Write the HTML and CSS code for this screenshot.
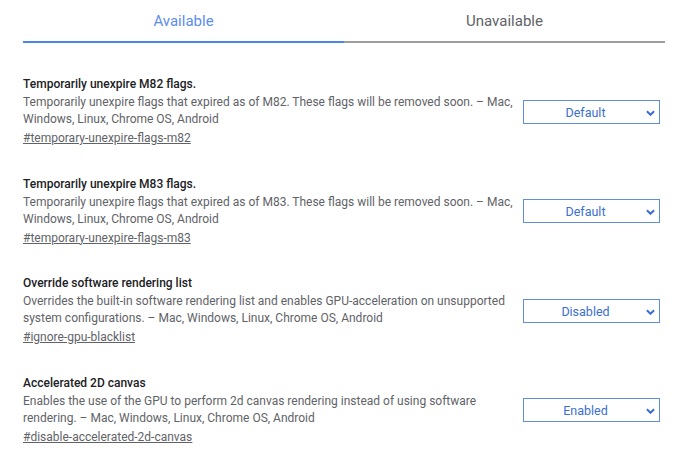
FILE: index.html
```html
<!DOCTYPE html>
<html lang="en">

<head>
  <meta charset="UTF-8">
  <meta name="viewport" content="width=device-width, initial-scale=1.0">
  <title>Experiments</title>
  <link rel="stylesheet" href="styles.css">
</head>

<body>
  <div class="wrapper">
    <div class="tabs">
      <div class="tab active">Available</div>
      <div class="tab">Unavailable</div>
    </div>
    <ul class="flags">
      <li class="flag">
        <div class="flag-text">
          <div class="flag-name">Temporarily unexpire M82 flags.</div>
          <p class="flag-desc">Temporarily unexpire flags that expired as of M82. These flags will be removed soon. – Mac, Windows, Linux, Chrome OS, Android</p>
          <a class="flag-link" href="#temporary-unexpire-flags-m82">#temporary-unexpire-flags-m82</a>
        </div>
        <div class="select">Default<svg class="chevron" viewBox="0 0 10 6"><path d="M1 1l4 4 4-4"/></svg></div>
      </li>
      <li class="flag">
        <div class="flag-text">
          <div class="flag-name">Temporarily unexpire M83 flags.</div>
          <p class="flag-desc">Temporarily unexpire flags that expired as of M83. These flags will be removed soon. – Mac, Windows, Linux, Chrome OS, Android</p>
          <a class="flag-link" href="#temporary-unexpire-flags-m83">#temporary-unexpire-flags-m83</a>
        </div>
        <div class="select">Default<svg class="chevron" viewBox="0 0 10 6"><path d="M1 1l4 4 4-4"/></svg></div>
      </li>
      <li class="flag">
        <div class="flag-text">
          <div class="flag-name">Override software rendering list</div>
          <p class="flag-desc">Overrides the built-in software rendering list and enables GPU-acceleration on unsupported system configurations. – Mac, Windows, Linux, Chrome OS, Android</p>
          <a class="flag-link" href="#ignore-gpu-blacklist">#ignore-gpu-blacklist</a>
        </div>
        <div class="select">Disabled<svg class="chevron" viewBox="0 0 10 6"><path d="M1 1l4 4 4-4"/></svg></div>
      </li>
      <li class="flag">
        <div class="flag-text">
          <div class="flag-name">Accelerated 2D canvas</div>
          <p class="flag-desc">Enables the use of the GPU to perform 2d canvas rendering instead of using software rendering. – Mac, Windows, Linux, Chrome OS, Android</p>
          <a class="flag-link" href="#disable-accelerated-2d-canvas">#disable-accelerated-2d-canvas</a>
        </div>
        <div class="select">Enabled<svg class="chevron" viewBox="0 0 10 6"><path d="M1 1l4 4 4-4"/></svg></div>
      </li>
    </ul>
  </div>
</body>

</html>
```

FILE: styles.css
```css
body {
  margin: 0;
  background: #fff;
  font-family: Roboto, "Liberation Sans", sans-serif;
  color: #5f6368;
}

.wrapper {
  width: 642px;
  margin-left: 23px;
}

.tabs {
  display: flex;
}

.tab {
  flex: 1;
  height: 41px;
  line-height: 42px;
  text-align: center;
  font-size: 15px;
  color: #5f6368;
  border-bottom: 2px solid #9e9e9e;
}

.tab.active {
  color: #5c8ded;
  border-bottom-color: #4a87e8;
}

.flags {
  margin: 0;
  padding: 0;
  list-style: none;
  padding-top: 33px;
}

.flag {
  display: flex;
  align-items: center;
  width: 637px;
  margin-bottom: 28.5px;
}

.flag-text {
  width: 490px;
  font-size: 12px;
  line-height: 17px;
}

.flag-name {
  font-weight: 500;
  color: #202124;
}

.flag-desc {
  margin: 1px 0 2px;
}

.flag-link {
  color: #5f6368;
  text-decoration: underline;
}

.select {
  margin-left: auto;
  width: 123px;
  height: 22px;
  padding-right: 12px;
  border: 1px solid #5f8fdc;
  color: #3b6fd0;
  font-size: 12.5px;
  line-height: 23px;
  text-align: center;
  position: relative;
}

.chevron {
  position: absolute;
  right: 4px;
  top: 9px;
  width: 9px;
  height: 6px;
  fill: none;
  stroke: #3b6fd0;
  stroke-width: 2.2;
}
```
